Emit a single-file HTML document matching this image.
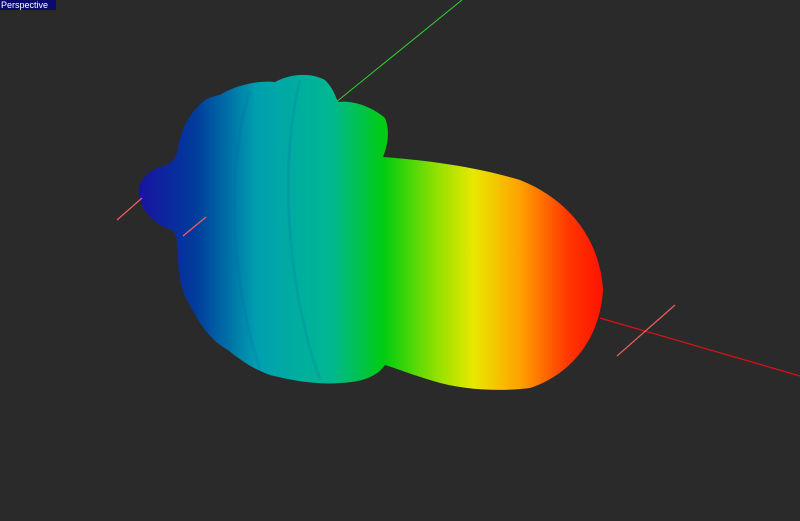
<!DOCTYPE html>
<html><head><meta charset="utf-8"><style>
html,body{margin:0;padding:0;background:#2a2a2a;width:800px;height:521px;overflow:hidden}
.lbl{position:absolute;left:0;top:0;width:55px;height:10px;background:#0a0a6e;color:#fff;font:9px/10px "Liberation Sans",sans-serif;padding-left:1px}
svg{position:absolute;left:0;top:0}
</style></head><body>
<svg width="800" height="521" viewBox="0 0 800 521">
<defs>
<linearGradient id="g" x1="135" y1="0" x2="605" y2="0" gradientUnits="userSpaceOnUse">
<stop offset="0" stop-color="#1a10a0"/>
<stop offset="0.13" stop-color="#003c9c"/>
<stop offset="0.26" stop-color="#00a0b0"/>
<stop offset="0.42" stop-color="#00b890"/>
<stop offset="0.53" stop-color="#00cc10"/>
<stop offset="0.64" stop-color="#90e000"/>
<stop offset="0.72" stop-color="#e8e800"/>
<stop offset="0.82" stop-color="#ffa000"/>
<stop offset="0.92" stop-color="#ff3800"/>
<stop offset="1" stop-color="#ff1000"/>
</linearGradient>
</defs>
<line x1="335" y1="103" x2="462" y2="0" stroke="#30d030" stroke-width="1"/>
<line x1="600" y1="318" x2="800" y2="376" stroke="#e01010" stroke-width="1.2"/>
<path fill="url(#g)" d="M220,95 C235,85 260,80 275,82 C290,74 310,72 325,80 C333,88 335,95 338,102 C350,100 370,105 385,118 C390,130 388,145 383,157 C420,160 470,165 520,180 C570,200 600,240 603,290 C600,340 570,375 530,388 C500,392 460,390 430,380 C410,374 395,368 385,365 C378,375 365,382 340,383 C315,385 290,380 270,375 C255,370 240,360 228,350 C210,340 200,325 190,305 C180,290 178,270 178,255 C175,245 180,238 172,230 C158,226 145,215 140,200 C135,185 145,172 160,167 C170,165 175,160 178,150 C180,130 190,112 205,100 C210,97 215,96 220,95 Z"/>
<path fill="none" stroke="#0060a8" stroke-opacity="0.15" stroke-width="3" d="M250,90 C230,150 225,260 260,370 M300,80 C280,160 285,280 320,380"/>
<line x1="117" y1="220" x2="142" y2="198" stroke="#f06060" stroke-width="1.2"/>
<line x1="183" y1="236" x2="206" y2="217" stroke="#f06060" stroke-width="1.2"/>
<line x1="617" y1="356" x2="675" y2="305" stroke="#e86060" stroke-width="1.2"/>
</svg>
<div class="lbl">Perspective</div>
</body></html>
